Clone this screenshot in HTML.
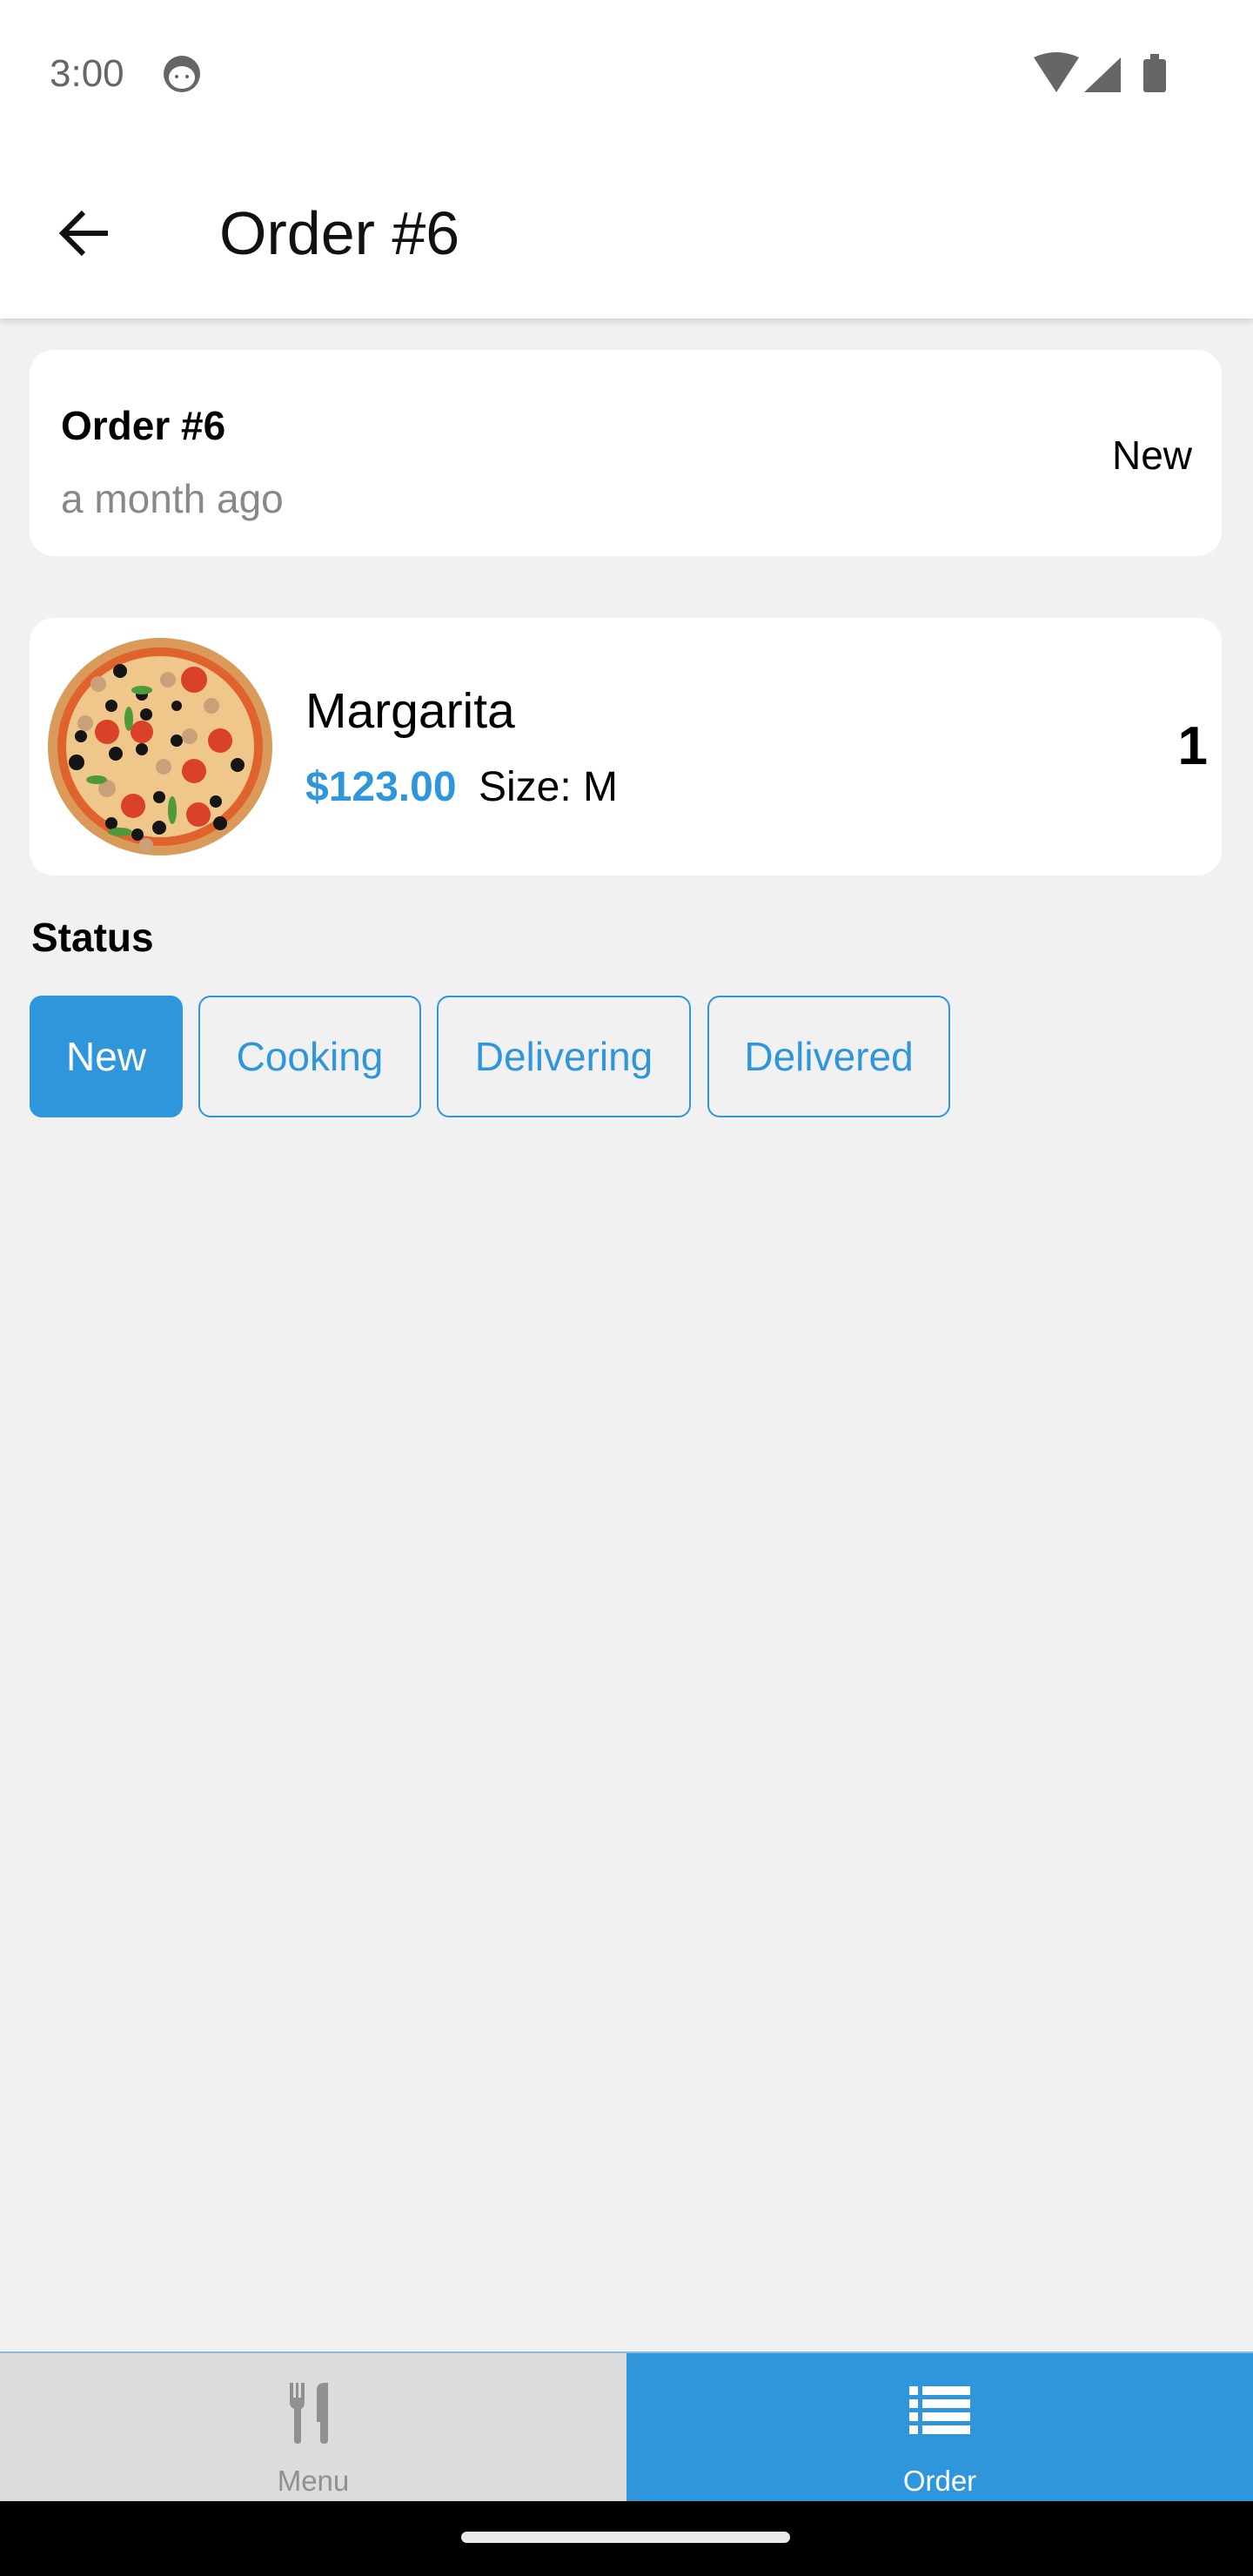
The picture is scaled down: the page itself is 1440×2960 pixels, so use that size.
<!DOCTYPE html>
<html><head><meta charset="utf-8"><style>
*{margin:0;padding:0;box-sizing:border-box}
body{width:1440px;height:2960px;background:#f1f1f1;font-family:"Liberation Sans",sans-serif;position:relative;overflow:hidden}
.a{position:absolute;white-space:nowrap}
.card{position:absolute;background:#fff;border-radius:28px}
.btn{position:absolute;top:1144px;height:140px;border:2px solid #3096dc;border-radius:14px;color:#3096dc;font-size:46px;display:flex;align-items:center;justify-content:center}
</style></head><body>
<div class="a" style="left:0;top:0;width:1440px;height:366px;background:#fff;box-shadow:0 3px 8px rgba(0,0,0,.15)"></div>
<div class="a" style="left:57px;top:62px;font-size:44px;line-height:46px;color:#666">3:00</div>
<svg class="a" style="left:186px;top:62px" width="46" height="46" viewBox="0 0 46 46"><circle cx="23" cy="23" r="21" fill="#666"/><ellipse cx="23" cy="27" rx="15" ry="13" fill="#fff"/><circle cx="17" cy="26" r="2" fill="#666"/><circle cx="29" cy="26" r="2" fill="#666"/></svg>
<svg class="a" style="left:1186px;top:60px" width="160" height="50" viewBox="0 0 160 50"><path d="M2 6 Q28 -6 54 6 L28 46 Z" fill="#666"/><path d="M60 46 L102 6 L102 46 Z" fill="#666"/><rect x="128" y="8" width="26" height="38" rx="3" fill="#666"/><rect x="136" y="2" width="10" height="8" fill="#666"/></svg>
<svg class="a" style="left:66px;top:238px" width="62" height="60" viewBox="0 0 62 60"><path d="M58 30 H10 M30 6 L6 30 L30 54" stroke="#111" stroke-width="6" fill="none"/></svg>
<div class="a" style="left:252px;top:228px;font-size:70px;line-height:80px;color:#111">Order #6</div>

<div class="card" style="left:34px;top:402px;width:1370px;height:237px"></div>
<div class="a" style="left:70px;top:462px;font-size:46px;line-height:54px;font-weight:bold">Order #6</div>
<div class="a" style="left:70px;top:546px;font-size:46px;line-height:54px;color:#888">a month ago</div>
<div class="a" style="right:70px;top:496px;font-size:46px;line-height:54px">New</div>

<div class="card" style="left:34px;top:710px;width:1370px;height:296px"></div>
<svg class="a" style="left:53px;top:731px" width="262" height="254" viewBox="0 0 262 254">
<ellipse cx="131" cy="127" rx="129" ry="125" fill="#d99a5a"/>
<ellipse cx="131" cy="127" rx="118" ry="114" fill="#e0632e"/>
<ellipse cx="131" cy="127" rx="108" ry="104" fill="#f0c78a"/>
<g fill="#d9412b"><circle cx="70" cy="110" r="14"/><circle cx="170" cy="50" r="15"/><circle cx="200" cy="120" r="14"/><circle cx="110" cy="110" r="13"/><circle cx="170" cy="155" r="14"/><circle cx="100" cy="195" r="14"/><circle cx="175" cy="205" r="14"/></g>
<g fill="#151515"><circle cx="85" cy="40" r="8"/><circle cx="110" cy="67" r="7"/><circle cx="75" cy="80" r="7"/><circle cx="115" cy="90" r="7"/><circle cx="40" cy="115" r="7"/><circle cx="80" cy="135" r="8"/><circle cx="110" cy="130" r="7"/><circle cx="35" cy="145" r="9"/><circle cx="150" cy="80" r="6"/><circle cx="150" cy="120" r="7"/><circle cx="220" cy="148" r="8"/><circle cx="130" cy="185" r="7"/><circle cx="195" cy="190" r="7"/><circle cx="200" cy="215" r="8"/><circle cx="130" cy="220" r="8"/><circle cx="105" cy="228" r="7"/><circle cx="75" cy="215" r="7"/></g>
<g fill="#c9a07a"><circle cx="60" cy="55" r="9"/><circle cx="140" cy="50" r="9"/><circle cx="190" cy="80" r="9"/><circle cx="45" cy="100" r="9"/><circle cx="165" cy="115" r="9"/><circle cx="135" cy="150" r="9"/><circle cx="70" cy="175" r="10"/><circle cx="115" cy="240" r="8"/></g>
<g fill="#4c9a3a"><ellipse cx="95" cy="95" rx="5" ry="14"/><ellipse cx="58" cy="165" rx="12" ry="5"/><ellipse cx="145" cy="200" rx="5" ry="16"/><ellipse cx="85" cy="225" rx="14" ry="5"/><ellipse cx="110" cy="62" rx="12" ry="5"/></g>
</svg>
<div class="a" style="left:351px;top:785px;font-size:57px;line-height:64px">Margarita</div>
<div class="a" style="left:351px;top:876px;font-size:48px;line-height:58px;font-weight:bold;color:#3096dc">$123.00</div>
<div class="a" style="left:550px;top:876px;font-size:48px;line-height:58px">Size: M</div>
<div class="a" style="right:52px;top:822px;font-size:62px;line-height:72px;font-weight:bold">1</div>

<div class="a" style="left:36px;top:1050px;font-size:46px;line-height:54px;font-weight:bold">Status</div>
<div class="btn" style="left:34px;width:176px;background:#3096dc;color:#fff">New</div>
<div class="btn" style="left:228px;width:256px">Cooking</div>
<div class="btn" style="left:502px;width:292px">Delivering</div>
<div class="btn" style="left:813px;width:279px">Delivered</div>

<div class="a" style="left:0;top:2702px;width:1440px;height:2px;background:#8cbde0"></div>
<div class="a" style="left:0;top:2704px;width:720px;height:170px;background:#dcdcdc"></div>
<div class="a" style="left:720px;top:2704px;width:720px;height:170px;background:#3096dc"></div>
<svg class="a" style="left:332px;top:2738px" width="56" height="70" viewBox="0 0 56 70"><path d="M1 0 H5 V17 H8 V0 H11 V17 H14 V0 H18 V23 Q18 28 14 30 V66 Q14 70 10 70 Q6 70 6 66 V30 Q1 28 1 23 Z" fill="#909090"/><path d="M32 8 Q32 0 42 0 H45 V66 Q45 70 40 70 Q36 70 36 66 V45 H32 Z" fill="#909090"/></svg>
<div class="a" style="left:0;top:2830px;width:720px;text-align:center;font-size:33px;line-height:42px;color:#909090">Menu</div>
<svg class="a" style="left:1045px;top:2742px" width="70" height="56" viewBox="0 0 70 56"><g fill="#fff"><rect x="0" y="0" width="10" height="10"/><rect x="15" y="0" width="55" height="10"/><rect x="0" y="15" width="10" height="10"/><rect x="15" y="15" width="55" height="10"/><rect x="0" y="30" width="10" height="10"/><rect x="15" y="30" width="55" height="10"/><rect x="0" y="45" width="10" height="10"/><rect x="15" y="45" width="55" height="10"/></g></svg>
<div class="a" style="left:720px;top:2830px;width:720px;text-align:center;font-size:33px;line-height:42px;color:#fff">Order</div>
<div class="a" style="left:0;top:2874px;width:1440px;height:86px;background:#000"></div>
<div class="a" style="left:530px;top:2909px;width:378px;height:13px;border-radius:7px;background:#eaeaea"></div>
</body></html>
